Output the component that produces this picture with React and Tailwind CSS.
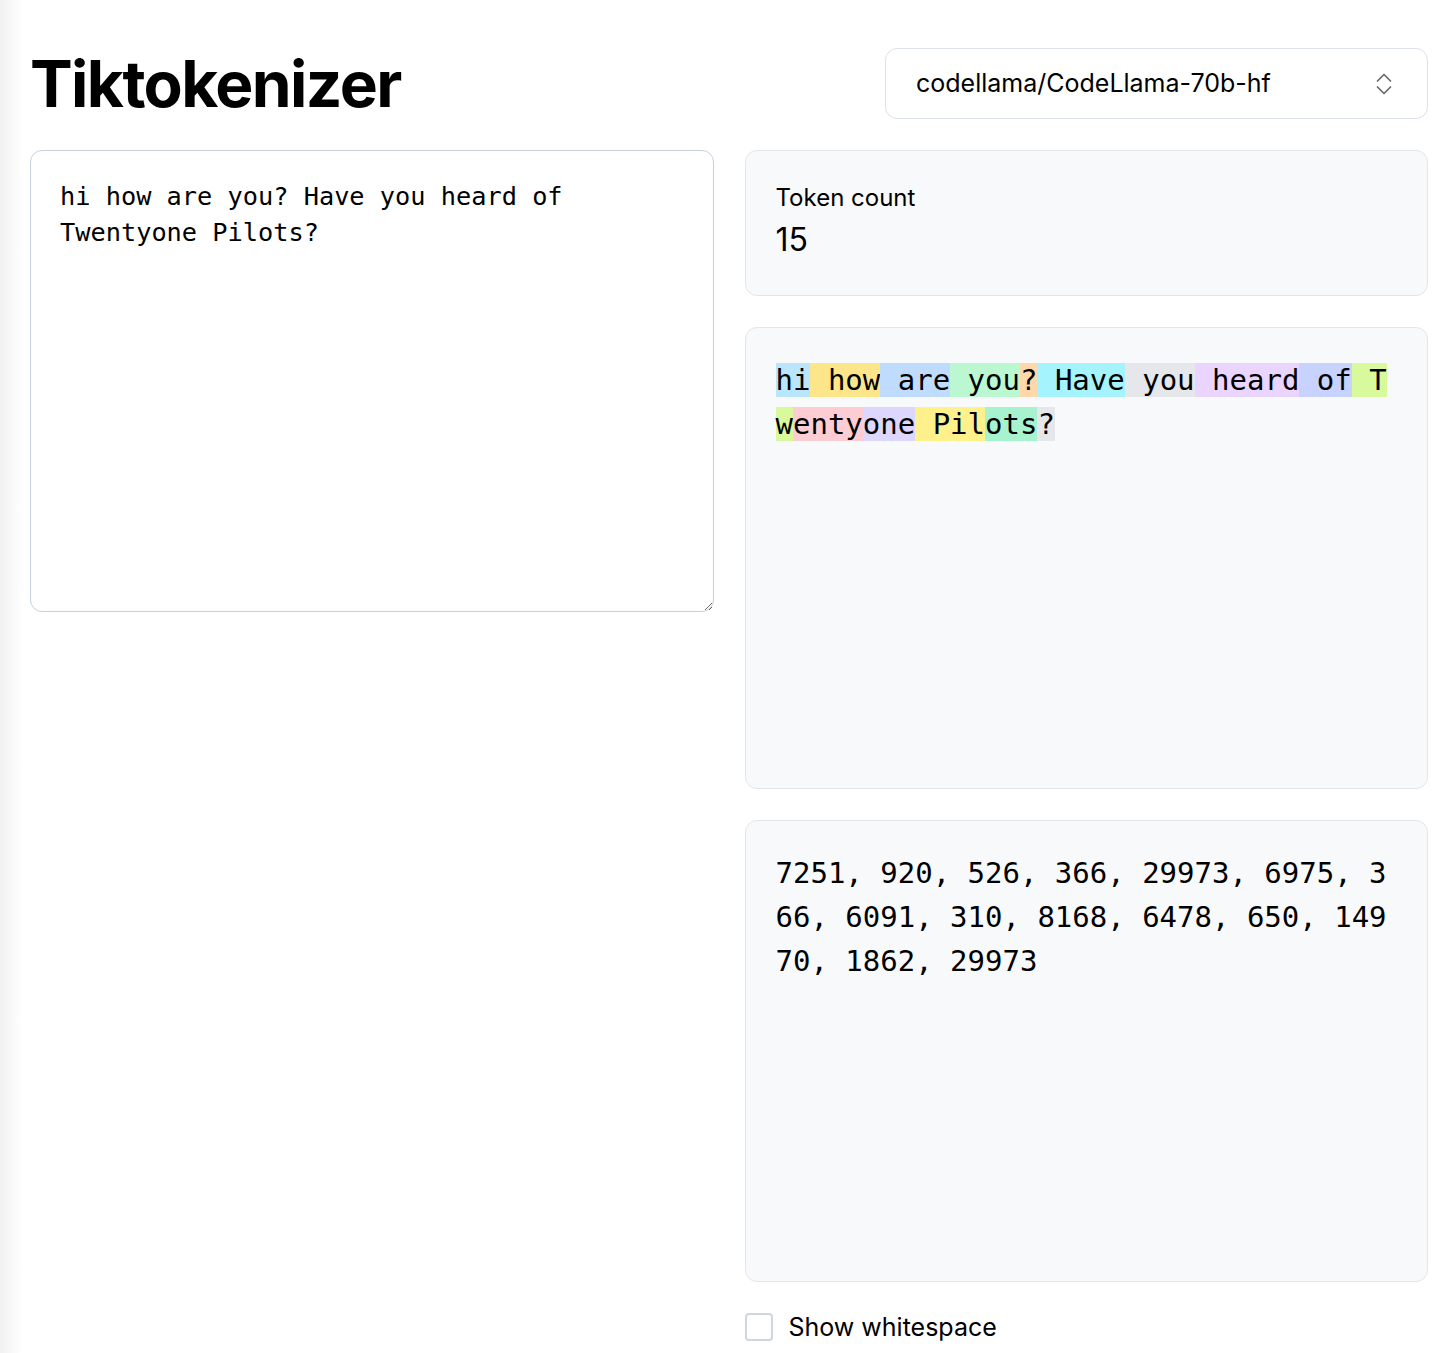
import React, { useState } from 'react'

const tokens = [
  ['hi', 'bg-[#bae6fd]'],
  [' how', 'bg-[#fde68a]'],
  [' are', 'bg-[#bfdbfe]'],
  [' you', 'bg-[#bbf7d0]'],
  ['?', 'bg-[#fed7aa]'],
  [' Have', 'bg-[#a5f3fc]'],
  [' you', 'bg-[#e5e7eb]'],
  [' heard', 'bg-[#e9d5ff]'],
  [' of', 'bg-[#c7d2fe]'],
  [' Tw', 'bg-[#d9f99d]'],
  ['enty', 'bg-[#fecdd3]'],
  ['one', 'bg-[#ddd6fe]'],
  [' Pil', 'bg-[#fef08a]'],
  ['ots', 'bg-[#a7f3d0]'],
  ['?', 'bg-[#e5e7eb]'],
]

const ids = [7251, 920, 526, 366, 29973, 6975, 366, 6091, 310, 8168, 6478, 650, 14970, 1862, 29973]

export default function App(){
  const [text, setText] = useState('hi how are you? Have you heard of Twentyone Pilots?')
  const [model, setModel] = useState('codellama/CodeLlama-70b-hf')
  const [ws, setWs] = useState(false)

  return (
    <div className="min-h-[1353px] bg-[linear-gradient(to_right,#f1f1f1,#ffffff_22px)] pl-[30px] pr-[28px] pt-[48px] font-['Inter',sans-serif] text-black">
      <div className="flex items-center justify-between h-[71px]">
        <h1 className="text-[64px] font-bold tracking-tight leading-none">Tiktokenizer</h1>
        <div className="relative w-[543px] h-[71px]">
          <select
            value={model}
            onChange={e=>setModel(e.target.value)}
            className="appearance-none w-full h-full rounded-[12px] border border-[#dde2ea] bg-white pl-[30px] pr-[60px] text-[25px] text-black outline-none"
          >
            <option>codellama/CodeLlama-70b-hf</option>
            <option>gpt-4o</option>
            <option>cl100k_base</option>
          </select>
          <svg className="absolute right-[36px] top-[25px] pointer-events-none" width="16" height="22" viewBox="0 0 16 22" fill="none" stroke="#6b6b6b" strokeWidth="1.7" strokeLinecap="round" strokeLinejoin="round">
            <path d="M1.5 8 L8 1.5 L14.5 8" />
            <path d="M1.5 14 L8 20.5 L14.5 14" />
          </svg>
        </div>
      </div>

      <div className="mt-[31px] grid grid-cols-2 gap-x-[31px] items-start">
        <textarea
          value={text}
          onChange={e=>setText(e.target.value)}
          className="w-full h-[462px] rounded-[12px] border border-[#c6d0de] bg-white px-[29px] pt-[28px] font-['DejaVu_Sans_Mono',monospace] text-[25.3px] leading-[36px] text-black outline-none"
        />

        <div className="flex flex-col gap-[31px]">
          <div className="h-[146px] rounded-[12px] border border-[#e2e5ea] bg-[#f8f9fb] px-[30px] pt-[32px]">
            <div className="text-[24px] leading-[30px]">Token count</div>
            <div className="mt-[7px] text-[32px] leading-[40px]">15</div>
          </div>

          <div className="h-[462px] rounded-[12px] border border-[#e2e5ea] bg-[#f8f9fb] px-[30px] pt-[30px] font-['DejaVu_Sans_Mono',monospace] text-[29px] leading-[44px] whitespace-pre-wrap break-all">
            {tokens.map(([t, c], i) => (
              <span key={i} className={c}>{ws ? t.replace(/ /g, '⋅') : t}</span>
            ))}
          </div>

          <div className="h-[462px] rounded-[12px] border border-[#e2e5ea] bg-[#f8f9fb] px-[30px] pt-[30px] font-['DejaVu_Sans_Mono',monospace] text-[29px] leading-[44px] break-all">
            {ids.join(', ')}
          </div>

          <label className="flex items-center gap-[16px] h-[28px]">
            <input
              type="checkbox"
              checked={ws}
              onChange={e=>setWs(e.target.checked)}
              className="appearance-none w-[28px] h-[28px] rounded-[4px] border-2 border-[#cdd6e2] bg-white checked:bg-black"
            />
            <span className="text-[25px] leading-[28px]">Show whitespace</span>
          </label>
        </div>
      </div>
    </div>
  )
}
